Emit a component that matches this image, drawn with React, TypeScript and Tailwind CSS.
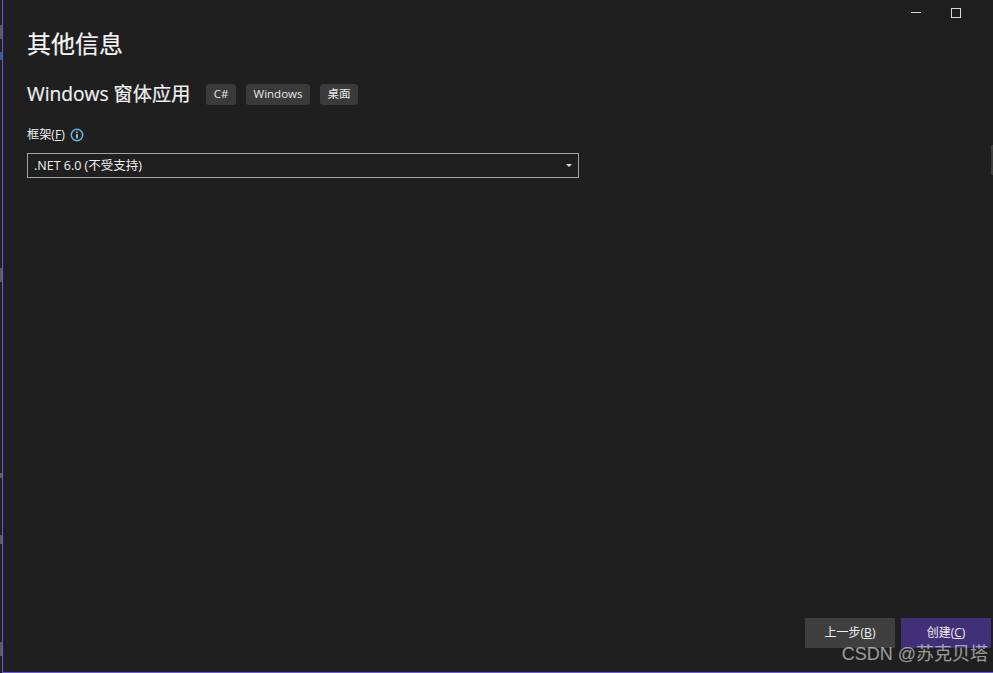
import React from 'react';

const font = "font-['Open_Sans','Noto_Sans_CJK_SC',sans-serif]";

const chips = ['C#', 'Windows', '桌面'];

export default function App() {
  return (
    <div className={`relative flex h-[673px] w-[993px] overflow-hidden bg-[#1f1f1f] text-[#f1f1f1] ${font}`}>
      {/* bit of the window behind, left of the border */}
      <div className="w-[2px] shrink-0 bg-[#1f1f1f]" />
      <div className="flex min-w-0 flex-1 flex-col border-b border-l border-[#6c58e8]">
        <div className="flex h-[23px] shrink-0 items-center justify-end gap-[30px] pr-[32px] pt-[2px]">
          <div className="h-px w-[10px] bg-[#d8d8d8]" />
          <div className="h-[10px] w-[10px] border border-[#d8d8d8]" />
        </div>

        <main className="flex-1 pl-[24px] pt-[3px]">
          <h1 className="text-[24px] leading-[36px] font-normal text-[#f5f5f5] [-webkit-text-stroke:0.2px_#f5f5f5]">其他信息</h1>

          <div className="mt-[16px] flex h-[32px] items-center gap-[16px]">
            <h2 className="text-[19.2px] leading-[32px] font-normal [-webkit-text-stroke:0.2px_#f1f1f1]">Windows 窗体应用</h2>
            <div className="flex items-center gap-[10px]">
              {chips.map((c) => (
                <span
                  key={c}
                  className="flex h-[21px] items-center rounded-[3px] bg-[#3a3a3a] px-[7.5px] text-[11.5px] leading-none text-[#e8e8e8]"
                >
                  {c}
                </span>
              ))}
            </div>
          </div>

          <div className="mt-[15px] flex h-[20px] items-center gap-[5px] text-[12.2px]">
            <span>
              框架(<span className="underline">F</span>)
            </span>
            <svg width="14" height="14" viewBox="0 0 14 14" fill="none">
              <circle cx="7" cy="7" r="5.7" stroke="#5cb8e6" strokeWidth="1.5" />
              <rect x="6.3" y="6" width="1.4" height="4.4" fill="#e8f4fa" />
              <rect x="6.3" y="3.6" width="1.4" height="1.4" fill="#e8f4fa" />
            </svg>
          </div>

          <div className="mt-[8px] flex h-[25px] w-[552px] items-center justify-between border border-[#a0a0a0] pl-[6px] pr-[6px] text-[12.5px] text-[#f1f1f1]">
            <span className="pt-[2px]">.NET 6.0 (不受支持)</span>
            <svg width="6" height="3" viewBox="0 0 6 3">
              <path d="M0 0h6L3 3z" fill="#d8d8d8" />
            </svg>
          </div>
        </main>

        <footer className="flex shrink-0 justify-end gap-[6px] pb-[24px] pr-[2px] text-[12px]">
          <button className="h-[30px] w-[90px] bg-[#3f3f3f] text-[#f1f1f1]">
            上一步(<span className="underline">B</span>)
          </button>
          <button className="h-[30px] w-[90px] bg-[#413078] text-[#f1f1f1]">
            创建(<span className="underline">C</span>)
          </button>
        </footer>
      </div>

      {/* scraps of the window behind */}
      <div className="absolute left-0 top-[25px] h-[14px] w-[2px] bg-[#5a5a5a]" />
      <div className="absolute left-0 top-[52px] h-[8px] w-[2px] bg-[#3f5a88]" />
      <div className="absolute left-0 top-[268px] h-[14px] w-[2px] bg-[#5a5a5a]" />
      <div className="absolute left-0 top-[473px] h-[5px] w-[2px] bg-[#6a5a5a]" />
      <div className="absolute left-0 top-[535px] h-[9px] w-[2px] bg-[#5a5a5a]" />
      <div className="absolute left-0 top-[642px] h-[14px] w-[2px] bg-[#5a5a5a]" />
      {/* scrollbar sliver */}
      <div className="absolute right-0 top-[145px] h-[30px] w-[2px] bg-[#3c3c3c]" />
      {/* watermark */}
      <span className="absolute right-[5px] top-[642px] font-['Liberation_Sans','Noto_Sans_CJK_SC',sans-serif] text-[18px] leading-[24px] text-[#ffffff]/55">
        CSDN @苏克贝塔
      </span>
    </div>
  );
}
